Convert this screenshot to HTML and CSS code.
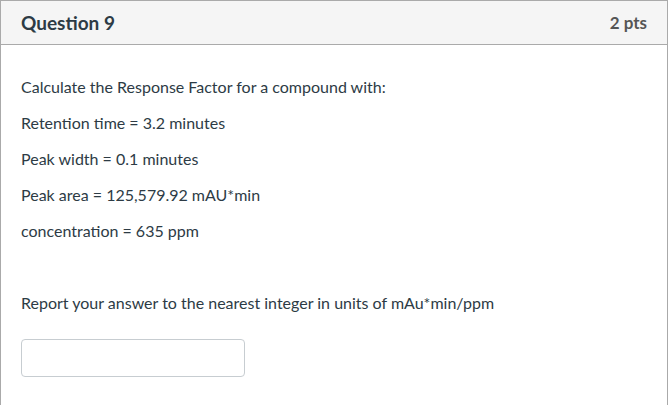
FILE: index.html
```html
<!DOCTYPE html>
<html>
<head>
<meta charset="utf-8">
<link rel="stylesheet" href="styles.css">
</head>
<body>
<div class="question">
  <div class="header">
    <span class="title">Question 9</span>
    <span class="pts">2 pts</span>
  </div>
  <div class="content">
    <p>Calculate the Response Factor for a compound with:</p>
    <p>Retention time = 3.2 minutes</p>
    <p>Peak width = 0.1 minutes</p>
    <p>Peak area = 125,579.92 mAU*min</p>
    <p>concentration = 635 ppm</p>
    <p class="blank">&nbsp;</p>
    <p>Report your answer to the nearest integer in units of mAu*min/ppm</p>
    <div class="answer"><input type="text" class="field"></div>
  </div>
</div>
</body>
</html>
```
FILE: styles.css
```css
html, body {
  margin: 0;
  padding: 0;
  background: #ffffff;
}
body {
  font-family: Lato, "Open Sans", sans-serif;
  color: #2d3b45;
}
.question {
  width: 668px;
  height: 405px;
  box-sizing: border-box;
  border: 1px solid #aaaaaa;
  border-bottom: none;
}
.header {
  height: 43px;
  background: #f5f5f5;
  border-bottom: 1px solid #aaaaaa;
  display: flex;
  align-items: center;
  justify-content: space-between;
  padding: 0 20px;
}
.title {
  font-weight: bold;
  font-size: 19px;
  color: #2d3b45;
}
.pts {
  font-size: 17px;
  font-weight: bold;
  color: #555555;
}
.content {
  padding: 18px 20px 0 20px;
}
.content p {
  margin: 12px 0;
  font-size: 16px;
  line-height: 24px;
}
.answer {
  margin-top: 24px;
}
.field {
  display: block;
  width: 224px;
  height: 38px;
  box-sizing: border-box;
  border: 1px solid #c7cdd1;
  border-radius: 4px;
  margin: 0;
  padding: 0 8px;
  background: #fff;
}
```
